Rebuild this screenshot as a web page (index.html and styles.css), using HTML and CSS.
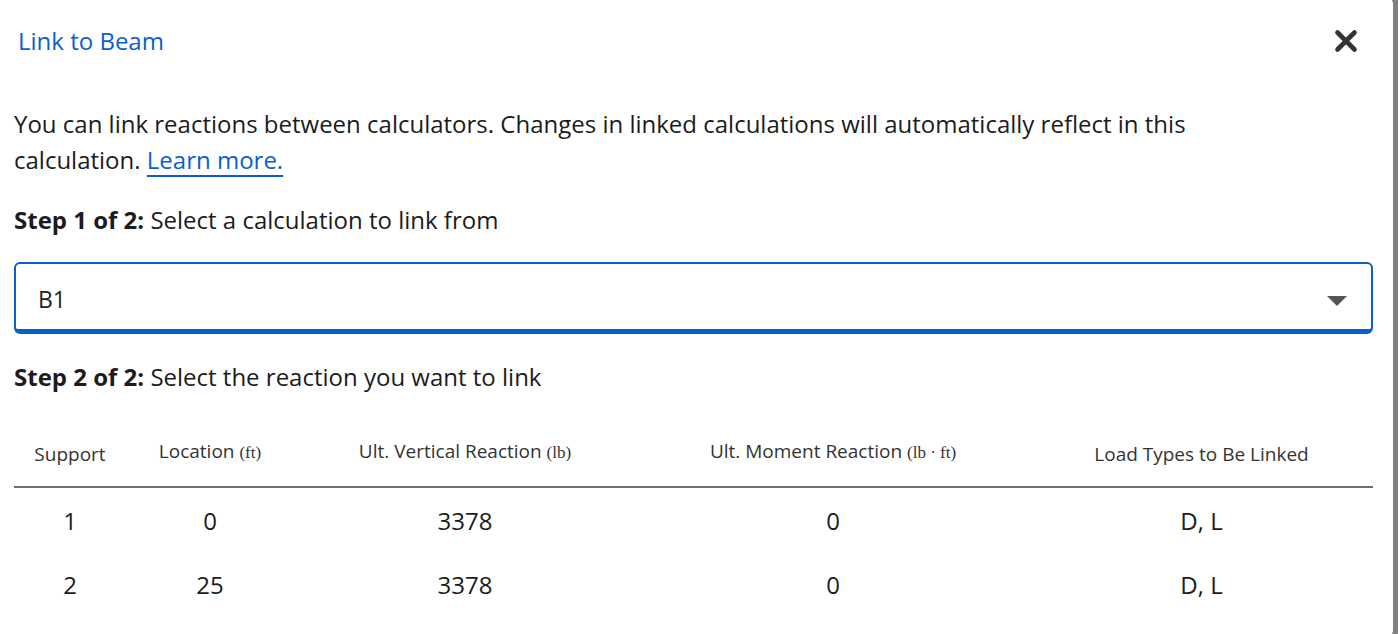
FILE: index.html
```html
<!DOCTYPE html>
<html lang="en">
<head>
<meta charset="utf-8">
<title>Link to Beam</title>
<link rel="stylesheet" href="styles.css">
</head>
<body>
<div class="modal">
  <div class="modal-header">
    <h2 class="title">Link to Beam</h2>
    <button class="close" aria-label="Close">
      <svg width="24" height="24" viewBox="0 0 24 24"><path d="M3.5 3.5 L20.5 20.5 M20.5 3.5 L3.5 20.5" stroke="#333" stroke-width="4.6" stroke-linecap="round"/></svg>
    </button>
  </div>
  <p class="intro">You can link reactions between calculators. Changes in linked calculations will automatically reflect in this calculation. <a href="#" class="learn">Learn more.</a></p>
  <p class="step"><b>Step 1 of 2:</b> Select a calculation to link from</p>
  <div class="select">
    <span class="select-value">B1</span>
    <svg class="caret" width="20" height="10" viewBox="0 0 20 10"><path d="M0 0 H20 L10 10 Z" fill="#555"/></svg>
  </div>
  <p class="step step2"><b>Step 2 of 2:</b> Select the reaction you want to link</p>
  <div class="table">
    <div class="row head">
      <div class="cell">Support</div>
      <div class="cell">Location <span class="unit">(ft)</span></div>
      <div class="cell">Ult. Vertical Reaction <span class="unit">(lb)</span></div>
      <div class="cell">Ult. Moment Reaction <span class="unit">(lb · ft)</span></div>
      <div class="cell">Load Types to Be Linked</div>
    </div>
    <div class="row">
      <div class="cell">1</div>
      <div class="cell">0</div>
      <div class="cell">3378</div>
      <div class="cell">0</div>
      <div class="cell">D, L</div>
    </div>
    <div class="row">
      <div class="cell">2</div>
      <div class="cell">25</div>
      <div class="cell">3378</div>
      <div class="cell">0</div>
      <div class="cell">D, L</div>
    </div>
  </div>
</div>
</body>
</html>
```
FILE: styles.css
```css
html, body {
  margin: 0;
  padding: 0;
  height: 634px;
  overflow: hidden;
}
body {
  background: #808080;
  font-family: "Open Sans", "Noto Sans", sans-serif;
  color: #1c1c1c;
}
.modal {
  width: 1393px;
  height: 642px;
  margin-top: -4px;
  background: #fff;
  border-radius: 0 8px 8px 0;
  box-sizing: border-box;
  padding: 29px 25px 0 14px;
}
.modal-header {
  display: flex;
  align-items: center;
  justify-content: space-between;
  height: 32px;
}
.title {
  margin: 0 0 0 4px;
  font-size: 24px;
  font-weight: 400;
  color: #0b5fcd;
  line-height: 32px;
}
.close {
  border: 0;
  background: none;
  padding: 0;
  width: 24px;
  height: 24px;
  margin-right: 10px;
  display: flex;
  cursor: pointer;
}
.intro {
  margin: 49px 0 0;
  font-size: 24px;
  line-height: 36px;
  max-width: 1200px;
}
.learn {
  color: #0a5ed4;
  text-decoration: underline;
  text-decoration-thickness: 2px;
  text-underline-offset: 6px;
}
.step {
  margin: 24px 0 0;
  font-size: 24px;
  line-height: 36px;
}
.step b {
  font-weight: 700;
}
.select {
  margin-top: 24px;
  width: 1359px;
  height: 72px;
  box-sizing: border-box;
  border: 2px solid #0b5fcd;
  border-bottom-width: 5px;
  border-radius: 6px;
  display: flex;
  align-items: center;
  justify-content: space-between;
  padding: 0 24px 0 22px;
}
.select-value {
  font-size: 23px;
  color: #222;
  margin-top: 4px;
}
.caret {
  margin-top: 9px;
}
.step2 {
  margin-top: 25px;
}
.table {
  margin-top: 30px;
  width: 1359px;
}
.row {
  display: grid;
  grid-template-columns: 112px 168px 342px 394px 1fr;
  align-items: center;
  height: 64px;
  font-size: 24px;
  color: #1c1c1c;
}
.row .cell {
  text-align: center;
}
.row.head {
  height: auto;
  padding: 15px 0 18px;
  border-bottom: 2px solid #6f6f6f;
  font-size: 19px;
  color: #333;
  line-height: 26px;
}
.row.head .cell:nth-child(2),
.row.head .cell:nth-child(3),
.row.head .cell:nth-child(4) {
  position: relative;
  top: -2px;
}
.unit {
  font-family: "Liberation Serif", "DejaVu Serif", serif;
  font-size: 17px;
}
```
